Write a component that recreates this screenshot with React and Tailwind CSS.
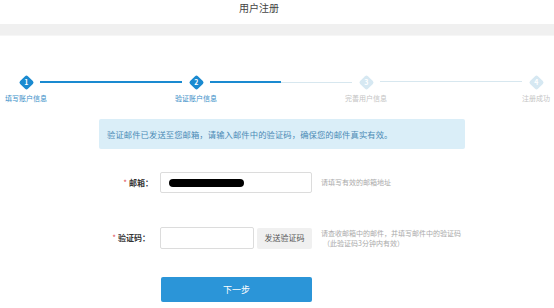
import React from "react";

const steps = [
  { n: 1, label: "填写账户信息", active: true },
  { n: 2, label: "验证账户信息", active: true },
  { n: 3, label: "完善用户信息", active: false },
  { n: 4, label: "注册成功", active: false },
];

function Step({ step }) {
  return (
    <div className="relative flex flex-col items-center w-4 shrink-0">
      <div className="w-4 h-4 flex items-center justify-center">
        <div
          className={`w-[11px] h-[11px] rotate-45 rounded-[2px] flex items-center justify-center ${
            step.active ? "bg-[#1a8ad0]" : "bg-[#d6e8f2]"
          }`}
        >
          <span className="-rotate-45 text-[7px] font-bold text-white leading-none">{step.n}</span>
        </div>
      </div>
      <span
        className={`mt-[4px] whitespace-nowrap text-[7px] leading-[9px] ${
          step.active ? "text-[#3a8fc8]" : "text-[#c4c4c4]"
        }`}
      >
        {step.label}
      </span>
    </div>
  );
}

export default function App() {
  return (
    <div
      className="w-[554px] h-[308px] bg-white overflow-hidden"
      style={{ fontFamily: '"Noto Sans CJK SC", "Noto Sans", sans-serif' }}
    >
      {/* HEADER */}
      <div className="h-[24px] flex justify-center">
        <h1 className="mt-[1px] mr-[36px] text-[10px] leading-[14px] text-[#444] font-normal">用户注册</h1>
      </div>
      <div className="h-[12px] bg-[#f0f0f0] border-b border-[#f6f6f6]"></div>

      {/* STEPS */}
      <div className="mt-[38px] ml-[18px] w-[526px] flex items-start">
        <Step step={steps[0]} />
        <div className="flex-1 mx-[6px] mt-[7px] h-[2px] bg-[#1a8ad0]"></div>
        <Step step={steps[1]} />
        <div className="flex-1 mx-[6px] mt-[7px] h-[2px] flex">
          <div className="w-1/2 bg-[#1a8ad0]"></div>
          <div className="w-1/2 h-[1px] mt-[0.5px] bg-[#d7e7ef]"></div>
        </div>
        <Step step={steps[2]} />
        <div className="flex-1 mx-[6px] mt-[7px] h-[1px] bg-[#d7e7ef]"></div>
        <Step step={steps[3]} />
      </div>

      {/* INFO */}
      <div className="mt-[16px] ml-[99px] w-[366px] h-[30px] bg-[#daeef8] rounded-[2px] flex items-center pl-[8px]">
        <p className="text-[8.3px] text-[#4a8ab5] tracking-[0.1px]">
          验证邮件已发送至您邮箱，请输入邮件中的验证码，确保您的邮件真实有效。
        </p>
      </div>

      {/* FORM */}
      <div className="mt-[23px] flex items-center">
        <label className="w-[153px] text-right text-[8px] text-[#333] font-bold">
          <span className="text-[#e0505a] font-normal mr-[2px]">*</span>邮箱：
        </label>
        <div className="ml-[7px] w-[152px] h-[21px] border border-[#dcdcdc] rounded-[2px] flex items-center pl-[8px]">
          <div className="w-[75px] h-[8px] bg-black rounded-full"></div>
        </div>
        <span className="ml-[9px] text-[7px] text-[#aaa]">请填写有效的邮箱地址</span>
      </div>

      <div className="mt-[34px] flex items-center">
        <label className="w-[150px] text-right text-[8px] text-[#333] font-bold">
          <span className="text-[#e0505a] font-normal mr-[2px]">*</span>验证码：
        </label>
        <div className="ml-[10px] w-[94px] h-[22px] border border-[#dcdcdc] rounded-[2px]"></div>
        <button className="ml-[3px] w-[55px] h-[21px] bg-[#f0f0f0] rounded-[2px] text-[8px] text-[#555]">
          发送验证码
        </button>
        <div className="ml-[9px] text-[7px] leading-[10px] text-[#aaa]">
          <p>请查收邮箱中的邮件，并填写邮件中的验证码</p>
          <p className="pl-[2px]">（此验证码3分钟内有效）</p>
        </div>
      </div>

      <button className="mt-[28px] ml-[161px] w-[151px] h-[25px] bg-[#2b95d8] rounded-[2px] text-[9px] text-white">
        下一步
      </button>
    </div>
  );
}
